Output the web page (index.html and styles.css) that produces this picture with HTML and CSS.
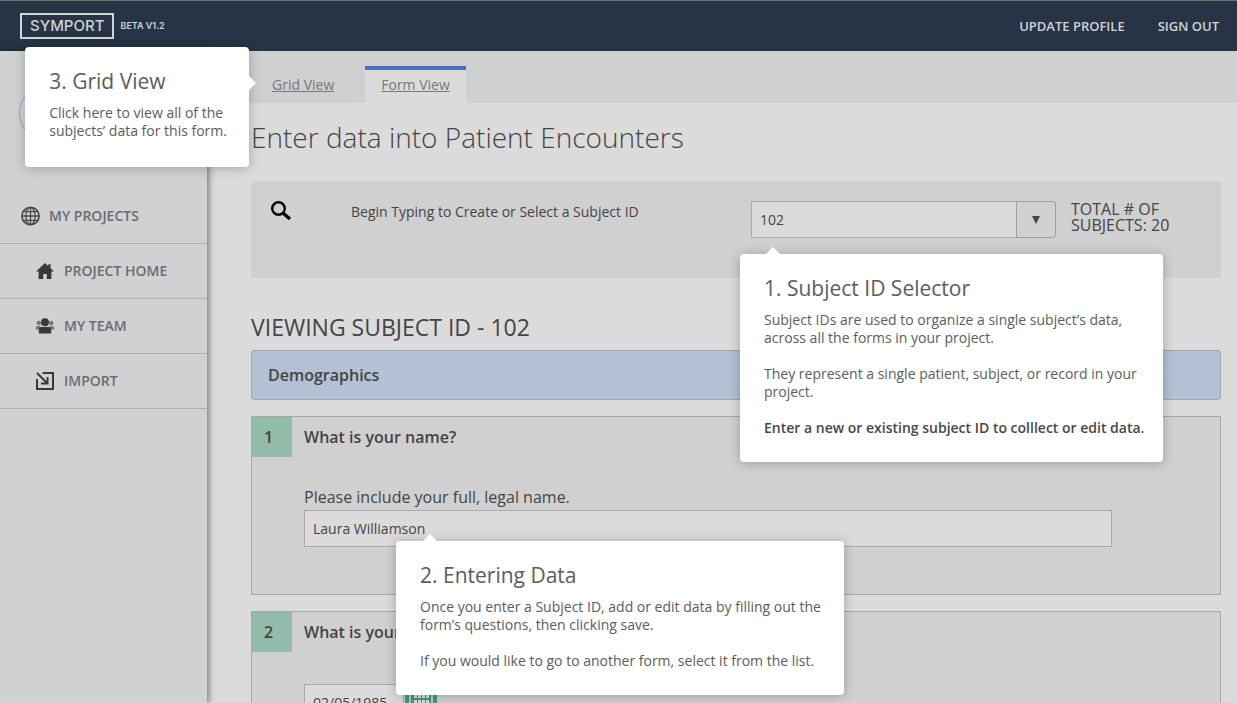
FILE: index.html
```html
<!DOCTYPE html>
<html lang="en">
<head>
<meta charset="utf-8">
<title>Symport - Patient Encounters</title>
<link rel="stylesheet" href="styles.css">
</head>
<body>
<div class="page">
  <header class="topbar">
    <a class="brand" href="#"><span class="brand-name">SYMPORT</span><span class="brand-version">BETA V1.2</span></a>
    <nav class="account">
      <a href="#">UPDATE PROFILE</a>
      <a href="#">SIGN OUT</a>
    </nav>
  </header>

  <div class="layout">
    <aside class="sidebar">
      <div class="user"><div class="avatar"></div></div>
      <nav class="menu">
        <a class="menu-item" href="#">
          <svg width="20" height="20" viewBox="0 0 20 20" fill="none" stroke="#4a4b4d" stroke-width="1.3"><circle cx="10.500" cy="10" r="8.6" stroke-width="1.7"/><ellipse cx="10.500" cy="10" rx="4.6" ry="8.6"/><path d="M10.500 1.400v17.200M1.900 10h17.200M3.300 5.600h14.400M3.300 14.400h14.400"/></svg>
          MY PROJECTS
        </a>
        <a class="menu-item sub" href="#">
          <svg width="20" height="20" viewBox="0 0 20 20" fill="#39393b"><path d="M10 2 1 10.600h2.600V18h4.600v-5h3.600v5h4.600v-7.400H19L15.600 7.300V3.200h-2.400V5z"/></svg>
          PROJECT HOME
        </a>
        <a class="menu-item sub" href="#">
          <svg width="20" height="20" viewBox="0 0 20 20"><g fill="#77787a"><circle cx="3.800" cy="7" r="2.200"/><circle cx="16.200" cy="7" r="2.200"/><path d="M.8 13.600v-2.100q0-1.500 1.600-1.500h3v3.600zM19.200 13.600v-2.100q0-1.500-1.600-1.500h-3v3.600z"/></g><circle cx="10" cy="6.200" r="4" fill="#39393b"/><path d="M3.800 17.600v-4q0-2.600 2.600-2.600h7.200q2.600 0 2.600 2.600v4z" fill="#39393b"/></svg>
          MY TEAM
        </a>
        <a class="menu-item sub" href="#">
          <svg width="20" height="20" viewBox="0 0 20 20" fill="none" stroke="#39393b" stroke-width="2"><path d="M7.500 2H18v16H2V8M2 2l10 10M12.500 6v6.500H6"/></svg>
          IMPORT
        </a>
      </nav>
    </aside>

    <main class="main">
      <nav class="tabs">
        <div class="tab tab-grid">
          <a href="#">Grid View</a>
          <section class="tip tip-grid">
            <h3>3. Grid View</h3>
            <p>Click here to view all of the subjects’ data for this form.</p>
          </section>
        </div>
        <div class="tab active"><a href="#">Form View</a></div>
      </nav>

      <div class="content">
        <h1>Enter data into Patient Encounters</h1>

        <section class="finder">
          <svg width="22" height="22" viewBox="0 0 22 22" fill="none" stroke="#060606"><circle cx="7.500" cy="7.500" r="6.300" stroke-width="2.400"/><path d="m12 12 7 6" stroke-width="3.400"/></svg>
          <label for="subject">Begin Typing to Create or Select a Subject ID</label>
          <div class="combo">
            <input id="subject" type="text" value="102">
            <button type="button" aria-label="Show subjects"><svg width="10" height="10" viewBox="0 0 10 10" fill="#444"><path d="M1 1h8L5 9z"/></svg></button>
            <section class="tip tip-subject">
              <h3>1. Subject ID Selector</h3>
              <p>Subject IDs are used to organize a single subject’s data, across all the forms in your project.</p>
              <p>They represent a single patient, subject, or record in your project.</p>
              <p><strong>Enter a new or existing subject ID to colllect or edit data.</strong></p>
            </section>
          </div>
          <p class="total">TOTAL # OF SUBJECTS: 20</p>
        </section>

        <h2>VIEWING SUBJECT ID - 102</h2>
        <div class="group">Demographics</div>

        <section class="question">
          <div class="number">1</div>
          <div class="body">
            <h4>What is your name?</h4>
            <label for="name">Please include your full, legal name.</label>
            <div class="field">
              <input id="name" type="text" value="Laura Williamson">
              <section class="tip tip-data">
                <h3>2. Entering Data</h3>
                <p>Once you enter a Subject ID, add or edit data by filling out the form’s questions, then clicking save.</p>
                <p>If you would like to go to another form, select it from the list.</p>
              </section>
            </div>
          </div>
        </section>

        <section class="question">
          <div class="number">2</div>
          <div class="body">
            <h4>What is your date of birth?</h4>
            <div class="date">
              <input type="text" value="02/05/1985" aria-label="Date of birth">
              <button type="button" aria-label="Open calendar"><svg width="24" height="28" viewBox="0 0 24 28"><path d="M1 0v27h22V0" fill="none" stroke="#d3e4dc" stroke-width="1.500"/><g fill="#d3e4dc"><path d="M5 6h3v3H5zM9 6h3v3H9zM13 6h3v3h-3zM17 6h3v3h-3zM5 11h3v3H5zM9 11h3v3H9zM13 11h3v3h-3zM17 11h3v3h-3zM5 16h3v3H5zM9 16h3v3H9zM13 16h3v3h-3z"/></g></svg></button>
            </div>
          </div>
        </section>
      </div>
    </main>
  </div>
</div>
</body>
</html>
```

FILE: styles.css
```css
* { box-sizing: border-box; }

body {
  margin: 0;
  background: #dbdbdb;
  color: #444;
  font: 14px/18px "Open Sans", "Noto Sans", sans-serif;
}

h1, h2, h3, h4, p { margin: 0; font-weight: 400; }
a { color: inherit; text-decoration: none; }
svg { display: block; flex: none; }
input, button { font: inherit; color: inherit; margin: 0; border-radius: 0; }

.page {
  display: flex;
  flex-direction: column;
  height: 100vh;
  overflow: hidden;
}

.topbar {
  display: flex;
  flex: none;
  align-items: center;
  justify-content: space-between;
  height: 51px;
  padding: 0 18px 0 20px;
  border-top: 1px solid #6f7069;
  background: #263446;
  color: #d0d2d4;
}

.brand { display: flex; align-items: center; gap: 6px; }
.brand-name {
  padding: 0 8px;
  border: 2px solid #d0d4d4;
  font: 500 15px/22px Inter, sans-serif;
}
.brand-version { font: 600 9px/14px Inter, sans-serif; }
.account { display: flex; gap: 33px; font-size: 13px; font-weight: 600; }

.layout { display: flex; flex: 1; min-height: 0; }

.sidebar {
  flex: none;
  width: 207px;
  background: #cfd1d3;
  box-shadow: 2px 0 6px rgba(0, 0, 0, .45);
}
.user { height: 138px; padding: 35px 19px; }
.avatar {
  width: 54px;
  height: 54px;
  border: 1px solid #8fa9bb;
  border-radius: 50%;
  background: #d3d6d8;
}
.menu-item {
  display: flex;
  align-items: center;
  gap: 9px;
  height: 55px;
  padding: 0 20px;
  border-bottom: 1px solid #adafb1;
  color: #6b6c6e;
  font-weight: 600;
}
.menu-item.sub { padding-left: 35px; }

.main { flex: 1; min-width: 0; }

.tabs {
  display: flex;
  align-items: flex-end;
  gap: 10px;
  height: 52px;
  padding-left: 44px;
  background: #cfd0d2;
}
.tab {
  position: relative;
  height: 37px;
  padding: 6px 16px;
  border-top: 4px solid transparent;
  color: #77787a;
}
.tab > a { text-decoration: underline; }
.tab-grid { padding: 6px 21px; background: #cfcfcf; }
.tab-grid { border-top-color: #cfcfcf; }
.tab.active { background: #dbdbdb; border-top-color: #4a6fbb; }

.content { padding: 14px 16px 0 44px; }

h1 { font-size: 28px; line-height: 40px; font-weight: 300; }

.finder {
  display: grid;
  grid-template-columns: 80px 1fr 305px 165px;
  align-items: start;
  height: 97px;
  margin-top: 24px;
  padding: 20px 0 0 20px;
  background: #d0d0d0;
}
.finder > label { margin-top: 2px; }
.combo { position: relative; display: flex; height: 37px; }
.combo > input {
  flex: 1;
  min-width: 0;
  padding: 0 8px;
  border: 1px solid #aaa;
  background: #dbdbdb;
}
.combo > button {
  display: grid;
  place-items: center;
  width: 40px;
  margin-left: -1px;
  padding: 0;
  border: 1px solid #a0a0a0;
  border-radius: 0 3px 3px 0;
  background: #d0d0d0;
}
.total { padding: 0 50px 0 15px; font-size: 16px; line-height: 16px; }

h2 { margin-top: 34px; font-size: 23px; line-height: 30px; }
.group {
  margin: 8px 0 16px;
  padding: 0 16px;
  border: 1px solid #a3a6ab;
  border-radius: 3px;
  background: #b3c1d4;
  font-size: 16px;
  line-height: 48px;
  font-weight: 600;
}

.question {
  display: flex;
  gap: 12px;
  min-height: 179px;
  margin-bottom: 16px;
  border: 1px solid #a6a7a8;
  background: #d0d0d0;
  font-size: 16px;
}
.number {
  flex: none;
  width: 40px;
  height: 40px;
  padding-left: 12px;
  background: #92bba9;
  line-height: 40px;
  font-weight: 600;
}
.body { flex: 1; padding-right: 108px; }
.body h4 { font-size: 16px; line-height: 40px; font-weight: 600; }
.body > label { display: block; margin-top: 27px; line-height: 26px; }
.field { position: relative; }
.field > input, .date > input {
  width: 100%;
  height: 37px;
  padding: 0 8px;
  border: 1px solid #aaa;
  background: #dbdbdb;
  font-size: 14px;
}
.date { display: flex; gap: 1px; margin-top: 32px; }
.date > input { width: 100px; }
.date > button {
  padding: 4px;
  border: 0;
  background: #459b7b;
}

.tip {
  position: absolute;
  z-index: 2;
  padding: 24px 16px 25px 24px;
  border-radius: 4px;
  background: #fff;
  box-shadow: 0 1px 12px rgba(0, 0, 0, .25);
  color: #5c5c5c;
  font-size: 14px;
}
.tip::before {
  content: "";
  position: absolute;
  width: 10px;
  height: 10px;
  background: #fff;
  transform: rotate(45deg);
}
.tip h3 { margin-bottom: 12px; font-size: 21px; line-height: 21px; }
.tip p + p { margin-top: 18px; }
.tip strong { color: #484848; font-weight: 600; }

.tip-grid { top: -23px; right: 106px; width: 224px; height: 120px; }
.tip-grid::before { top: 31px; right: -5px; }
.tip-subject { top: 53px; left: -11px; width: 423px; }
.tip-subject::before { top: -5px; left: 28px; }
.tip-data { top: 31px; left: 92px; width: 448px; }
.tip-data::before { top: -5px; left: 29px; }
```
